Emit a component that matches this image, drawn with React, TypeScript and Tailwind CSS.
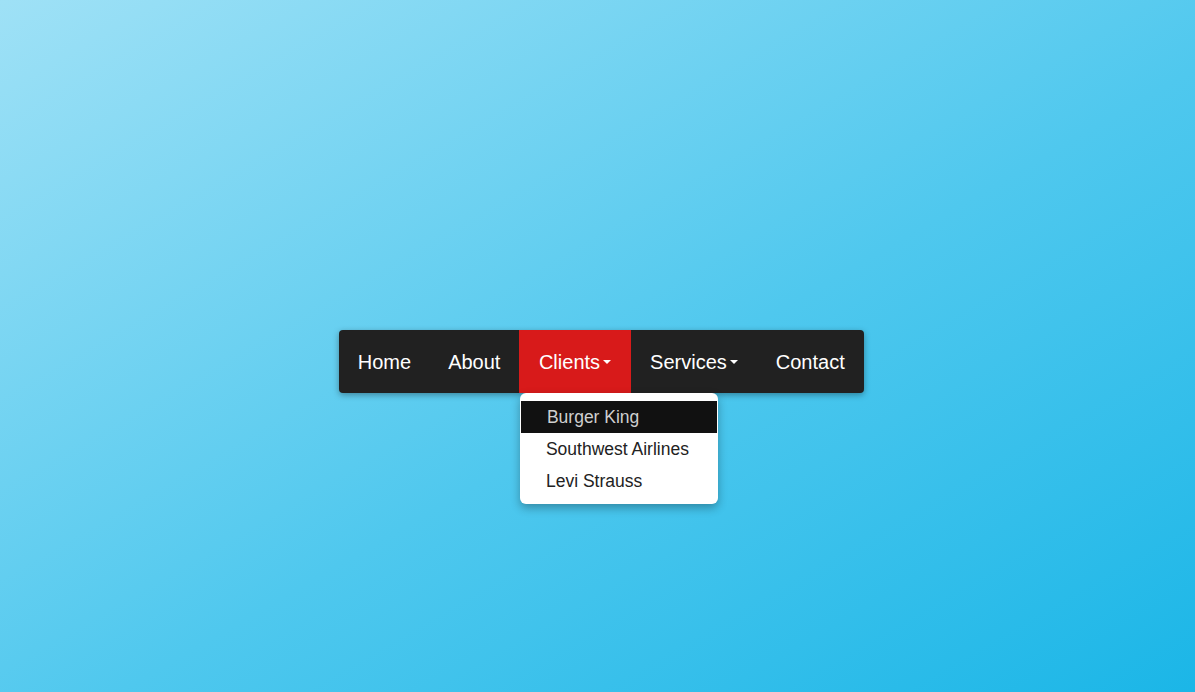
import React from 'react';

const NAV_ITEMS = [
    { label: 'Home', pad: 'px-[18.5px]' },
    { label: 'About', pad: 'px-[18.5px]' },
    { label: 'Clients', caret: true, active: true, pad: 'px-[20px]' },
    { label: 'Services', caret: true, pad: 'px-[19px]' },
    { label: 'Contact', pad: 'px-[19px]' },
];

const CLIENTS = ['Burger King', 'Southwest Airlines', 'Levi Strauss'];

function Caret() {
    return (
        <span className="ml-[3px] inline-block h-0 w-0 border-x-[4.5px] border-t-[4.5px] border-x-transparent border-t-white align-middle" />
    );
}

export default function App() {
    return (
        <div
            className="h-[692px] w-full bg-[linear-gradient(to_bottom_right,#9fe1f6,#4fc8ee_55%,#1bb6e7)] pt-[330px] pl-[8px] flex justify-center"
            style={{ fontFamily: '"Liberation Sans", Arial, sans-serif' }}
        >
            <nav className="relative h-[63px] flex rounded-[4px] bg-[#212121] shadow-[0_2px_6px_rgba(0,0,0,0.35)]">
                {NAV_ITEMS.map((item) => (
                    <div
                        key={item.label}
                        className={`relative flex items-center ${item.pad} text-[20px] text-white ${item.active ? 'bg-[#d81a1a]' : ''}`}
                    >
                        <span>{item.label}</span>
                        {item.caret && <Caret />}
                        {item.active && (
                            <ul className="absolute left-[1px] top-[63px] w-[198px] rounded-[6px] bg-white pt-[8px] pb-[7px] shadow-[0_4px_10px_rgba(0,0,0,0.3)]">
                                {CLIENTS.map((c, idx) => (
                                    <li
                                        key={c}
                                        className={`h-[32px] flex items-center pl-[26px] text-[17.5px] ${idx === 0 ? 'mx-[1px] pl-[25px] bg-[#111111] text-[#cfcfcf]' : 'text-[#222222]'}`}
                                    >
                                        {c}
                                    </li>
                                ))}
                            </ul>
                        )}
                    </div>
                ))}
            </nav>
        </div>
    );
}
